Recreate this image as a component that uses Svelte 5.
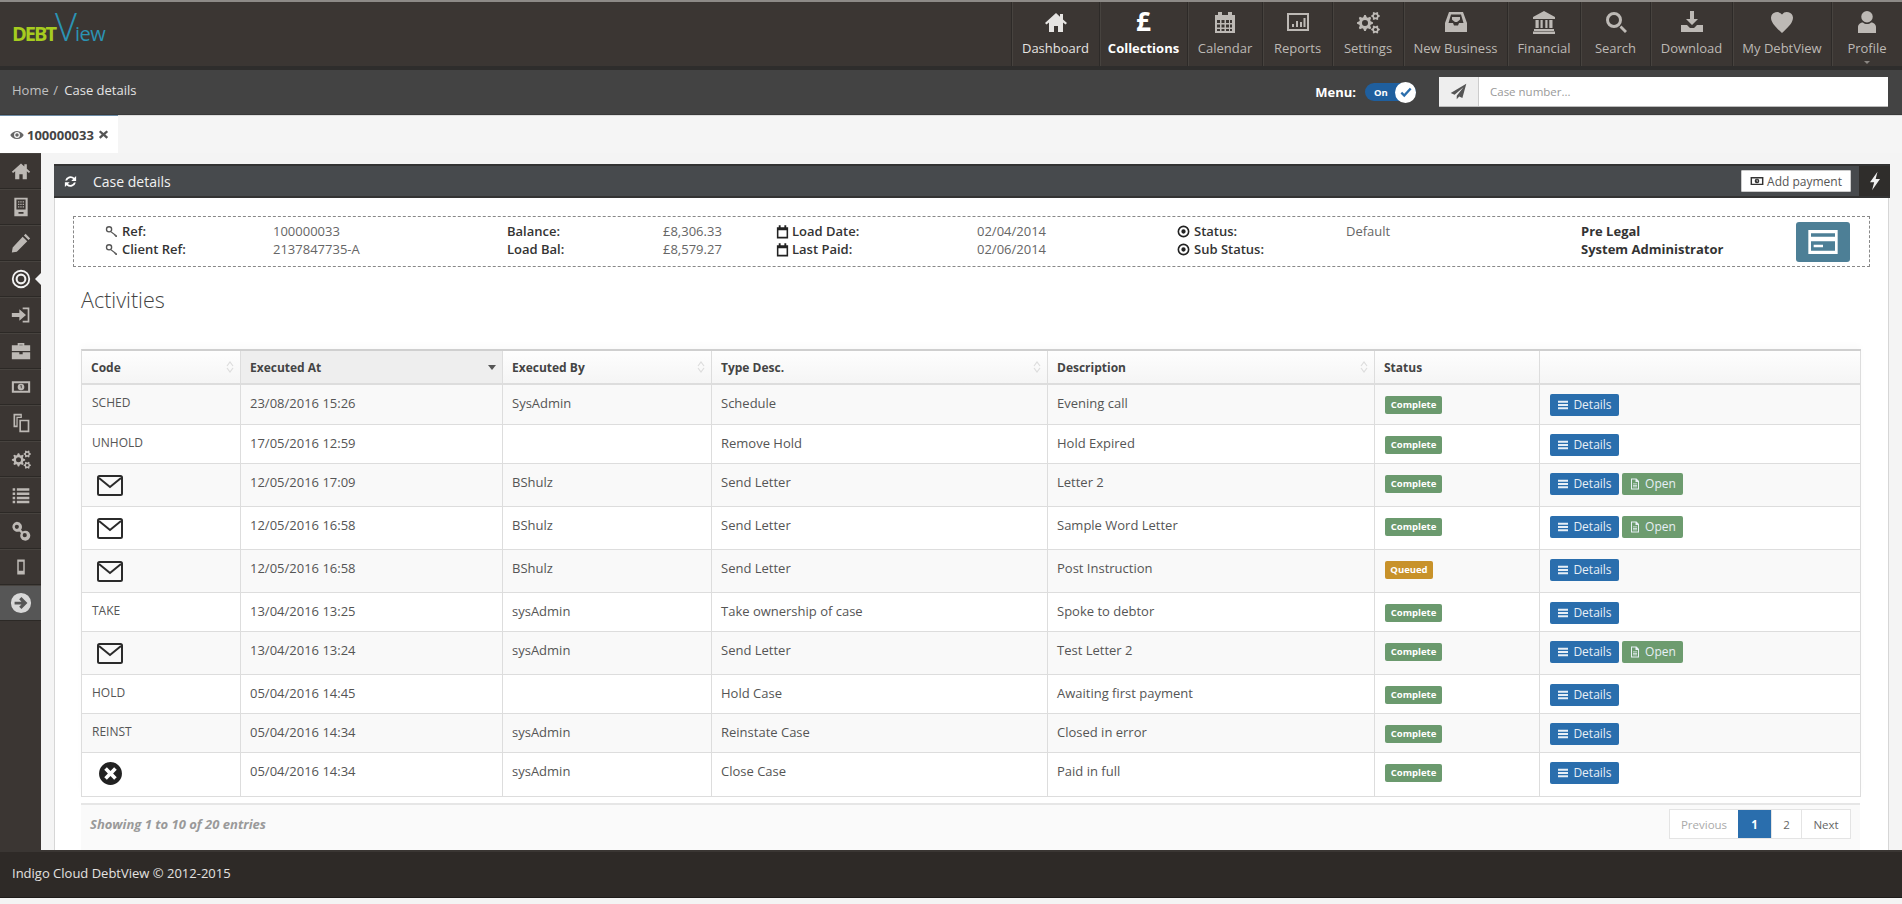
<script>
	// small helper so the cog icons don't need hand-typed teeth
	function gear(cx, cy, r, teeth, hole) {
		const pts = [];
		const step = (Math.PI * 2) / (teeth * 4);
		for (let i = 0; i < teeth * 4; i++) {
			const rad = i % 4 < 2 ? r : r * 0.74;
			const a = i * step - step / 2;
			pts.push((cx + Math.cos(a) * rad).toFixed(2) + ' ' + (cy + Math.sin(a) * rad).toFixed(2));
		}
		const h = `M${cx - hole} ${cy}a${hole} ${hole} 0 1 0 ${hole * 2} 0a${hole} ${hole} 0 1 0 ${-hole * 2} 0z`;
		return 'M' + pts.join('L') + 'z' + h;
	}

	const cogs = gear(9, 13, 8, 8, 3) + gear(19.5, 6, 4.4, 6, 1.6) + gear(19.5, 19.5, 4.4, 6, 1.6);

	const paths = {
		home: 'M12 3 1 13l1.5 1.5L5 12.4V22h5v-6h4v6h5v-9.6l2.5 2.1L23 13l-4-3.6V4h-3v2.7z',
		calendar: 'M2 5h3V2h4v3h6V2h4v3h3v18H2zM4 10v3h3v-3zm4.500 0v3h3v-3zm4.500 0v3h3v-3zm4 0v3h2v-3zM4 14.500v3h3v-3zm4.500 0v3h3v-3zm4.500 0v3h3v-3zm4 0v3h2v-3zM4 19v2h3v-2zm4.500 0v2h3v-2zm4.500 0v2h3v-2zm4 0v2h2v-2z',
		reports: 'M1 3h22v18H1zM3 5v14h18V5zM6 14h2v3H6zM10 11h2v6h-2zM14 12h2v5h-2zM17.500 8h2v9h-2z',
		cogs,
		inbox: 'M5 2h14l4 11v9H1v-9zM7 4.500 4.500 13H9l1 2.500h4l1-2.500h4.500L17 4.500zM8 7h8v2.500l-1 1-2 1.500h-2l-2-1.500-1-1z',
		bank: 'M12 1 1 7v2h22V7zM3.500 10h3.200v8H3.500zM8.500 10h2.200v8H8.500zM13.300 10h2.200v8h-2.200zM17.300 10h3.200v8h-3.200zM2 19h20v2H2zM1 21.500h22V24H1z',
		search: 'M10 2a8 8 0 1 0 0 16a8 8 0 0 0 0-16zM10 5a5 5 0 1 1 0 10a5 5 0 0 1 0-10zM15.500 17.500l2-2 5.500 5.500-2 2z',
		download: 'M10 1h4v8h4l-6 6-6-6h4zM1 15h6l3 3h4l3-3h6v7H1z',
		heart: 'M12 23C5 16.500 1 12.500 1 7.500A6.200 6.200 0 0 1 12 4.500a6.200 6.200 0 0 1 11 3C23 12.500 19 16.500 12 23z',
		user: 'M12 1a5.500 5.500 0 1 1 0 11.500a5.500 5.500 0 0 1 0-11.500zM3 23v-6c0-2.500 2.500-4.500 5-4.500 1 1 2.500 1.500 4 1.500s3-.5 4-1.500c2.500 0 5 2 5 4.500v6z',
		building: 'M4 1h16v22H4zM6.500 3v12h11V3zM8.500 5h1.500v1.500H8.500zM11.200 5h1.500v1.500h-1.500zM14 5h1.500v1.500H14zM8.500 8h1.500v1.500H8.500zM11.200 8h1.500v1.500h-1.500zM14 8h1.500v1.500H14zM8.500 11h1.500v1.500H8.500zM11.200 11h1.500v1.500h-1.500zM14 11h1.500v1.500H14zM9 18v2h6v-2z',
		pencil: 'M17.500 1 23 6.500 21 8.500 15.500 3zM14 4.500 19.500 10 7 22.500l-6 1 1-6z',
		target: 'M12 1a11 11 0 1 1 0 22a11 11 0 0 1 0-22zM12 3.200a8.800 8.800 0 1 0 0 17.600a8.800 8.800 0 0 0 0-17.600zM12 5.500a6.500 6.500 0 1 1 0 13a6.500 6.500 0 0 1 0-13zM12 8a4 4 0 1 0 0 8a4 4 0 0 0 0-8z',
		signin: 'M1 9.500h9V5l8 7-8 7v-4.500H1zM14 3h8v18h-8v-2h6V5h-6z',
		briefcase: 'M8 5V2.500h8V5h7v7H1V5zM10 5h4V4.500h-4zM1 13.500h9V16h4v-2.500h9V22H1z',
		money: 'M1 5h22v14H1zM3.500 7.500v9h17v-9zM12 8a4 4 0 1 1 0 8a4 4 0 0 1 0-8zM11.200 10v1h.6v2.500h1V10z',
		copy: 'M3 1h10v5H8v11H3zM5 3v12h1.500V4.500h5V3zM10 8h12v15H10zM12 10v11h8V10z',
		list: 'M2 4h3v3H2zM7 4h15v3H7zM2 9h3v3H2zM7 9h15v3H7zM2 14h3v3H2zM7 14h15v3H7zM2 19h3v3H2zM7 19h15v3H7z',
		chain: 'M7 1a6 6 0 0 1 5 9.500l2 2a6 6 0 1 1-2 2l-2-2A6 6 0 1 1 7 1zM7 4.500a2.500 2.500 0 1 0 0 5a2.500 2.500 0 0 0 0-5zM16.500 14.500a2.500 2.500 0 1 0 0 5a2.500 2.500 0 0 0 0-5z',
		mobile: 'M7 2h10v20H7zM9 5v12h6V5z',
		arrow: 'M12 1a11 11 0 1 1 0 22a11 11 0 0 1 0-22zM12.500 5.500 10 8l2.500 2.500H5v3h7.500L10 16l2.500 2.500L19 12z',
		refresh: 'M3.500 10.500A8.800 8.800 0 0 1 18.200 6L21 3.300V11h-7.700l2.900-2.900a6 6 0 0 0-9.700 2.400zM20.500 13.500A8.800 8.800 0 0 1 5.800 18L3 20.700V13h7.700l-2.900 2.900a6 6 0 0 0 9.700-2.400z',
		bolt: 'M15 1 6 13.500h5L8.500 23 18 9.500h-5.200z',
		key: 'M7.500 2a6 6 0 1 1 0 12a6 6 0 0 1 0-12zM7.500 4.500a3.500 3.500 0 1 0 0 7a3.500 3.500 0 0 0 0-7zM12 12l10 7.500v2.500h-3v-2h-2v-1.500l-6.500-5z',
		cal: 'M3 5h3V2h3v3h6V2h3v3h3v18H3zM5.500 10v10.500h13V10z',
		dot: 'M12 1a11 11 0 1 1 0 22a11 11 0 0 1 0-22zM12 4a8 8 0 1 0 0 16a8 8 0 0 0 0-16zM12 8a4 4 0 1 1 0 8a4 4 0 0 1 0-8z',
		eye: 'M12 5C6 5 2 9 .5 12 2 15 6 19 12 19s10-4 11.500-7C22 9 18 5 12 5zM12 7a5 5 0 1 0 0 10a5 5 0 0 0 0-10zM12 9a3 3 0 1 1 0 6a3 3 0 0 1 0-6z',
		times: 'M5.500 3 12 8.800 18.500 3 22 6.500 16 12l6 5.500-3.500 3.500L12 15.200 5.500 21 2 17.500 8 12 2 6.500z',
		plane: 'M23 1 1 14l5.500 2.500L19 6 9.500 18v5l3.500-4 4.500 2z',
		bars: 'M2 3.500h20v4H2zM2 10h20v4H2zM2 16.500h20v4H2z',
		file: 'M4 1h11l5 5v17H4zM6 3v18h12V8h-5V3zM8 11h8v1.500H8zM8 14h8v1.500H8zM8 17h8v1.500H8z',
		card: 'M1 3h22v18H1zM3 5.500V8h18V5.500zM3 11.500V18.500h18v-7zM5 14h7v2H5z',
		closed: 'M12 1a11 11 0 1 1 0 22a11 11 0 0 1 0-22zM8.500 6 6 8.500 9.500 12 6 15.500 8.500 18 12 14.500 15.500 18 18 15.500 14.500 12 18 8.500 15.500 6 12 9.500z'
	};

	const nav = [
		{ label: 'Dashboard', icon: 'home', w: 88, on: 'semi' },
		{ label: 'Collections', glyph: '£', w: 88, on: 'active' },
		{ label: 'Calendar', icon: 'calendar', w: 75 },
		{ label: 'Reports', icon: 'reports', w: 70 },
		{ label: 'Settings', icon: 'cogs', w: 71 },
		{ label: 'New Business', icon: 'inbox', w: 104 },
		{ label: 'Financial', icon: 'bank', w: 73 },
		{ label: 'Search', icon: 'search', w: 70 },
		{ label: 'Download', icon: 'download', w: 82 },
		{ label: 'My DebtView', icon: 'heart', w: 99 },
		{ label: 'Profile', icon: 'user', w: 71, caret: true }
	];

	const side = ['home', 'building', 'pencil', 'target', 'signin', 'briefcase', 'money', 'copy', 'cogs', 'list', 'chain', 'mobile'];

	const cols = [
		{ t: 'Code', w: 159 },
		{ t: 'Executed At', w: 262, sorted: true },
		{ t: 'Executed By', w: 209 },
		{ t: 'Type Desc.', w: 336 },
		{ t: 'Description', w: 327 },
		{ t: 'Status', w: 165, plain: true },
		{ t: '', w: 321, plain: true }
	];

	const rows = [
		{ code: 'SCHED', at: '23/08/2016 15:26', by: 'SysAdmin', type: 'Schedule', desc: 'Evening call' },
		{ code: 'UNHOLD', at: '17/05/2016 12:59', by: '', type: 'Remove Hold', desc: 'Hold Expired' },
		{ mail: true, at: '12/05/2016 17:09', by: 'BShulz', type: 'Send Letter', desc: 'Letter 2', open: true },
		{ mail: true, at: '12/05/2016 16:58', by: 'BShulz', type: 'Send Letter', desc: 'Sample Word Letter', open: true },
		{ mail: true, at: '12/05/2016 16:58', by: 'BShulz', type: 'Send Letter', desc: 'Post Instruction', queued: true },
		{ code: 'TAKE', at: '13/04/2016 13:25', by: 'sysAdmin', type: 'Take ownership of case', desc: 'Spoke to debtor' },
		{ mail: true, at: '13/04/2016 13:24', by: 'sysAdmin', type: 'Send Letter', desc: 'Test Letter 2', open: true },
		{ code: 'HOLD', at: '05/04/2016 14:45', by: '', type: 'Hold Case', desc: 'Awaiting first payment' },
		{ code: 'REINST', at: '05/04/2016 14:34', by: 'sysAdmin', type: 'Reinstate Case', desc: 'Closed in error' },
		{ closed: true, at: '05/04/2016 14:34', by: 'sysAdmin', type: 'Close Case', desc: 'Paid in full' }
	];
</script>

{#snippet icon(name, size)}
	<svg width={size} height={size} viewBox="0 0 24 24" fill="currentColor"><path fill-rule="evenodd" d={paths[name]} /></svg>
{/snippet}

<div class="shell">
	<header class="topbar">
		<div class="logo"><span class="debt">DEBT</span><span class="view"><span class="big-v">V</span>iew</span></div>
		<nav class="nav">
			{#each nav as item}
				<div class="nav-item {item.on ?? ''}" style="width: {item.w}px">
					<div class="nav-icon">
						{#if item.glyph}
							<span class="glyph">{item.glyph}</span>
						{:else}
							{@render icon(item.icon, 24)}
						{/if}
					</div>
					<span class="nav-label">{item.label}</span>
					{#if item.caret}<span class="caret"></span>{/if}
				</div>
			{/each}
		</nav>
	</header>

	<div class="subbar">
		<div class="crumbs"><span class="home">Home</span> <span class="slash">/</span> <span>Case details</span></div>
		<div class="menu-toggle">
			<span class="menu-label">Menu:</span>
			<span class="pill"><span class="on">On</span><span class="knob"><svg width="14" height="14" viewBox="0 0 24 24" fill="none" stroke="#2a6ead" stroke-width="4"><path d="M4 13l5 5 11-12" /></svg></span></span>
		</div>
		<div class="case-search">
			<span class="plane">{@render icon('plane', 17)}</span>
			<span class="placeholder">Case number...</span>
		</div>
	</div>

	<div class="tabs">
		<div class="tab">
			<span class="tab-eye">{@render icon('eye', 14)}</span>
			<span>100000033</span>
			<span class="tab-x">{@render icon('times', 11)}</span>
		</div>
	</div>

	<div class="body">
		<aside class="sidebar">
			{#each side as name, i}
				<div class="side-item" class:current={i === 3}>
					{@render icon(name, i === 11 ? 18 : 20)}
				</div>
			{/each}
			<div class="side-item last">{@render icon('arrow', 22)}</div>
		</aside>

		<main class="panel">
			<div class="panel-head">
				<span class="refresh">{@render icon('refresh', 15)}</span>
				<span class="panel-title">Case details</span>
				<button class="add-pay"><span class="add-ic">{@render icon('money', 14)}</span>Add payment</button>
				<span class="bolt">{@render icon('bolt', 20)}</span>
			</div>

			<div class="panel-body">
				<div class="summary">
					<b class="lbl"><span class="ic">{@render icon('key', 13)}</span>Ref:</b>
					<span>100000033</span>
					<b class="lbl">Balance:</b>
					<span>£8,306.33</span>
					<b class="lbl"><span class="ic dark">{@render icon('cal', 15)}</span>Load Date:</b>
					<span>02/04/2014</span>
					<b class="lbl"><span class="ic dark">{@render icon('dot', 13)}</span>Status:</b>
					<span>Default</span>
					<b class="lbl strong">Pre Legal</b>
					<div class="card-btn">{@render icon('card', 32)}</div>

					<b class="lbl"><span class="ic">{@render icon('key', 13)}</span>Client Ref:</b>
					<span>2137847735-A</span>
					<b class="lbl">Load Bal:</b>
					<span>£8,579.27</span>
					<b class="lbl"><span class="ic dark">{@render icon('cal', 15)}</span>Last Paid:</b>
					<span>02/06/2014</span>
					<b class="lbl"><span class="ic dark">{@render icon('dot', 13)}</span>Sub Status:</b>
					<span></span>
					<b class="lbl strong">System Administrator</b>
				</div>

				<h2 class="heading">Activities</h2>

				<table class="grid">
					<colgroup>
						{#each cols as c}<col style="width: {c.w}px" />{/each}
					</colgroup>
					<thead>
						<tr>
							{#each cols as c}
								<th class:sorted={c.sorted}>
									{c.t}
									{#if c.sorted}
										<span class="sort-down"></span>
									{:else if !c.plain}
										<svg class="sort-both" width="10" height="14" viewBox="0 0 10 14" fill="none" stroke="#ddd" stroke-width="1.200"><path d="M2 6l3-4 3 4M2 8l3 4 3-4" /></svg>
									{/if}
								</th>
							{/each}
						</tr>
					</thead>
					<tbody>
						{#each rows as r}
							<tr class:tall={r.mail || r.closed}>
								<td class="code">
									{#if r.mail}
										<svg class="mail" width="26" height="21" viewBox="0 0 26 21" fill="none" stroke="#2b2b2b" stroke-width="2"><rect x="1" y="1" width="24" height="19" rx="1.500" /><path d="M2 3l11 9 11-9" /></svg>
									{:else if r.closed}
										<span class="closed-ic">{@render icon('closed', 25)}</span>
									{:else}
										{r.code}
									{/if}
								</td>
								<td>{r.at}</td>
								<td>{r.by}</td>
								<td>{r.type}</td>
								<td>{r.desc}</td>
								<td class="shifted"><span class="badge" class:queued={r.queued}>{r.queued ? 'Queued' : 'Complete'}</span></td>
								<td class="shifted">
									<div class="actions">
										<span class="btn blue">{@render icon('bars', 12)}Details</span>
										{#if r.open}
											<span class="btn green">{@render icon('file', 12)}Open</span>
										{/if}
									</div>
								</td>
							</tr>
						{/each}
					</tbody>
				</table>

				<div class="table-foot">
					<span class="showing">Showing 1 to 10 of 20 entries</span>
					<div class="pager">
						<span class="pg prev">Previous</span>
						<span class="pg now">1</span>
						<span class="pg">2</span>
						<span class="pg">Next</span>
					</div>
				</div>
			</div>
		</main>
	</div>

	<footer class="footer">Indigo Cloud DebtView © 2012-2015</footer>
</div>

<style>
	:global(body) {
		margin: 0;
		background: #f4f4f4;
		font-family: 'Open Sans', sans-serif;
	}

	.shell { height: 904px; display: flex; flex-direction: column; overflow: hidden; font-size: 13px; }

	.topbar {
		height: 70px; flex-shrink: 0; box-sizing: border-box;
		display: flex; justify-content: space-between;
		background: #3b3633;
		border-top: 2px solid #8d8a87;
		border-bottom: 4px solid #2e2d2c;
	}
	.logo { display: flex; align-items: baseline; align-self: flex-start; padding-left: 12px; margin-top: 5px; line-height: 1; }
	.debt { font-size: 20px; font-weight: 700; color: #a6cc1f; letter-spacing: -2px; }
	.view { font-size: 20px; font-weight: 400; color: #2b93b3; letter-spacing: -0.5px; }
	.big-v { font-size: 38px; font-weight: 300; letter-spacing: -2px; }

	.nav { display: flex; }
	.nav-item {
		box-sizing: border-box; position: relative;
		display: flex; flex-direction: column; align-items: center;
		color: #bdb9b5; border-left: 1px solid #2d2a28;
		box-shadow: inset 1px 0 0 #47433f;
	}
	.nav-item.semi { color: #e6e4e2; }
	.nav-item.active { color: #fff; font-weight: 700; }
	.nav-icon { height: 30px; margin-top: 8px; display: flex; align-items: flex-start; justify-content: center; }
	.glyph { font-size: 26px; font-weight: 700; line-height: 35px; margin-top: -6px; color: #fff; }
	.nav-label { font-size: 13px; line-height: 16px; white-space: nowrap; }
	.caret {
		position: absolute; bottom: 2px; left: 50%; margin-left: -3px;
		border: 3px solid transparent; border-top-color: #8a8682; border-bottom: 0;
	}

	.subbar {
		height: 45px; flex-shrink: 0; box-sizing: border-box;
		display: flex; align-items: center; padding: 0 14px 0 12px;
		background: #434343; color: #e4e4e4; font-size: 13px;
		border-bottom: 1px solid #3a3a3a;
	}
	.crumbs { flex: 1; margin-top: -4px; }
	.home, .slash { color: #c0c0c0; }
	.slash { margin: 0 3px 0 1px; }
	.menu-toggle { display: flex; align-items: center; margin-right: 23px; }
	.menu-label { font-weight: 700; color: #fff; margin-right: 9px; }
	.pill {
		width: 51px; height: 18px; border-radius: 9px; background: #1f5f9e;
		display: flex; align-items: center; justify-content: space-between;
		position: relative; color: #fff; font-size: 9.5px; font-weight: 700;
	}
	.on { padding-left: 9px; }
	.knob {
		width: 21px; height: 21px; border-radius: 50%; background: #fff;
		display: flex; align-items: center; justify-content: center;
	}
	.case-search { width: 449px; height: 30px; display: flex; background: #fff; border-bottom: 1px solid #bbb; box-sizing: border-box; }
	.plane {
		width: 40px; display: flex; align-items: center; justify-content: center;
		background: #eee; color: #555; border-right: 1px solid #ccc; box-sizing: border-box;
	}
	.placeholder { line-height: 29px; padding-left: 11px; font-size: 11.5px; color: #999; }

	.tabs { height: 38px; flex-shrink: 0; background: #f5f5f5; border-top: 1px solid #ddd; box-sizing: border-box; }
	.tab {
		width: 118px; height: 38px; margin-top: -1px; box-sizing: border-box;
		border-top: 1px solid #6d8ca6; background: #fff;
		display: flex; align-items: center; gap: 3px; padding-left: 10px;
		color: #444; font-size: 13px; font-weight: 700;
	}
	.tab-eye { display: flex; color: #666; }
	.tab-x { display: flex; margin-left: 1px; color: #555; }

	.body { flex: 1; min-height: 0; display: flex; }
	.sidebar { width: 41px; flex-shrink: 0; background: #3b3633; }
	.side-item {
		height: 36px; box-sizing: border-box; position: relative;
		display: flex; align-items: center; justify-content: center;
		color: #bdb9b5; border-bottom: 1px solid #2c2926; box-shadow: inset 0 1px 0 #47433f;
	}
	.side-item.current { color: #f2f2f2; }
	.side-item.current::after {
		content: ''; position: absolute; right: 0; top: 12px;
		border: 6px solid transparent; border-right-color: #f4f4f4; border-left: 0;
	}
	.side-item.last { background: #565656; color: #d8d8d8; }

	.panel {
		flex: 1; min-width: 0; box-sizing: border-box;
		margin: 11px 13px 0 13px; background: #fff;
		border-left: 1px solid #d6d6d6; border-right: 1px solid #d6d6d6;
		display: flex; flex-direction: column;
	}
	.panel-head {
		height: 34px; flex-shrink: 0; box-sizing: border-box;
		margin: 0 -2px 0 -1px;
		display: flex; align-items: center;
		background: #474a4d; color: #f2f2f2;
		border-top: 2px solid #333; border-bottom: 2px solid #333;
	}
	.refresh { display: flex; margin-left: 9px; color: #fff; }
	.panel-title { margin-left: 15px; font-size: 14px; flex: 1; }
	.add-pay {
		width: 110px; height: 22px; padding: 0; border: 1px solid #ccc; background: #fff; border-radius: 1px;
		display: flex; align-items: center; justify-content: center; gap: 3px;
		font: 12px 'Open Sans', sans-serif; color: #555;
	}
	.add-ic { display: flex; color: #333; }
	.bolt {
		width: 31px; height: 30px; margin-left: 8px; background: #2f2d2b; color: #f0f0f0;
		display: flex; align-items: center; justify-content: center;
	}

	.panel-body { padding: 18px 18px 0 18px; }
	.summary {
		height: 51px; box-sizing: border-box; padding: 5px 0 0 31px;
		border: 1px dashed #888;
		display: grid;
		grid-template-columns: 168px 234px 156px 112px 202px 200px 169px 235px 215px 54px;
		grid-template-rows: 18px 18px;
		align-items: center;
		font-size: 13px; color: #666;
	}
	.lbl { font-weight: 600; color: #333; display: flex; align-items: center; white-space: nowrap; }
	.lbl.strong { font-weight: 700; }
	.ic { width: 17px; display: flex; color: #555; }
	.ic.dark { color: #222; }
	.card-btn {
		grid-column: 10; grid-row: 1 / span 2;
		width: 54px; height: 40px; border-radius: 3px; background: #4d7f96; color: #fff;
		display: flex; align-items: center; justify-content: center; align-self: start;
	}
	.heading { margin: 17px 0 0 8px; height: 65px; font-size: 21.5px; line-height: 32px; font-weight: 300; color: #444; }

	.grid {
		width: 1779px; margin-left: 8px; table-layout: fixed; border-collapse: separate; border-spacing: 0;
		font-size: 13px; color: #555;
		border-top: 2px solid #cfcfcf; border-left: 1px solid #ddd;
		box-shadow: 0 -4px 6px rgba(0, 0, 0, 0.02);
	}
	th {
		height: 34px; box-sizing: border-box; padding: 0 9px; text-align: left;
		font-size: 12px; font-weight: 700; color: #444; position: relative;
		background: linear-gradient(#fefefe, #f5f5f5);
		border-right: 1px solid #ddd; border-bottom: 2px solid #ddd;
	}
	th.sorted { background: #eee; }
	.sort-both { position: absolute; right: 5px; top: 9px; }
	.sort-down {
		position: absolute; right: 6px; top: 14px;
		border: 4px solid transparent; border-top: 5px solid #555; border-bottom: 0;
	}
	td {
		height: 39px; box-sizing: border-box; padding: 10px 9px 0; vertical-align: top;
		line-height: 16px; border-right: 1px solid #ddd; border-bottom: 1px solid #ddd;
	}
	td.code, td.shifted { padding-left: 10px; }
	td.code { font-size: 12px; }
	tr.tall td { height: 43px; }
	tbody tr:first-child td { height: 40px; }
	tbody tr:last-child td { height: 44px; }
	tbody tr:nth-child(odd) td { background: #f9f9f9; }
	.mail { display: block; margin: 1px 0 0 5px; }
	.closed-ic { display: block; height: 25px; margin: -2px 0 0 6px; color: #222; }
	.badge {
		display: inline-block; width: 57px; height: 18px; box-sizing: border-box; border-radius: 2px;
		background: #6b9a6e; color: #fff; text-align: center;
		font-size: 9.5px; font-weight: 700; line-height: 18px;
	}
	.badge.queued { width: 48px; background: #c8922a; }
	.actions { display: flex; gap: 3px; margin-top: -1px; }
	.btn {
		height: 22px; box-sizing: border-box; border-radius: 2px;
		display: flex; align-items: center; justify-content: center; gap: 4px;
		color: #e8eff6; font-size: 12px;
	}
	.btn.blue { width: 69px; background: #2a6ead; }
	.btn.green { width: 61px; background: #6d9c6f; }

	.table-foot {
		width: 1779px; height: 47px; margin: 6px 0 0 8px; box-sizing: border-box;
		display: flex; align-items: flex-start; justify-content: space-between;
		background: #fafafa; border-top: 2px solid #e6e6e6; padding: 4px 9px 0 9px;
	}
	.showing { font-weight: 700; font-style: italic; color: #999; line-height: 30px; }
	.pager { display: flex; height: 30px; border: 1px solid #e4e4e4; box-sizing: border-box; background: #fff; }
	.pg {
		display: flex; align-items: center; justify-content: center; width: 29px;
		font-size: 11.5px; color: #666; border-left: 1px solid #e4e4e4;
	}
	.pg:last-child { width: 48px; }
	.pg.prev { width: 68px; color: #aaa; border-left: 0; }
	.pg.now { width: 33px; background: #2a6ead; color: #fff; font-weight: 700; border-left: 0; }

	.footer {
		height: 48px; flex-shrink: 0; margin-bottom: 6px; box-sizing: border-box;
		display: flex; align-items: center; padding: 0 0 3px 12px;
		background: #2e2a27; color: #e4e2e0; font-size: 13px;
		border-top: 2px solid #3a3633; border-bottom: 1px solid #1f1c1a;
	}
</style>
